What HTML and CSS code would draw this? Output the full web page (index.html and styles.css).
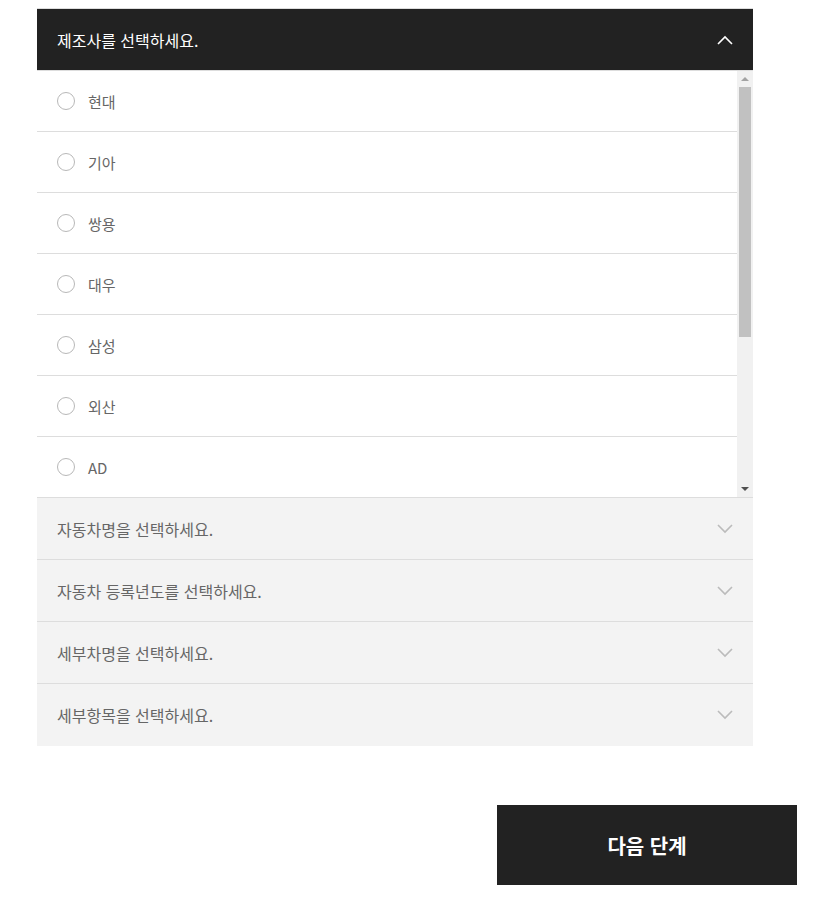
FILE: index.html
```html
<!DOCTYPE html>
<html lang="ko">
<head>
  <meta charset="UTF-8" />
  <meta name="viewport" content="width=device-width, initial-scale=1.0" />
  <title>차량 선택</title>
  <link rel="stylesheet" href="styles.css">
</head>
<body>
  <div class="wrap">
    <div class="panel">
      <div class="step open">
        <div class="step-head">
          <span class="step-title">제조사를 선택하세요.</span>
          <svg class="chev" width="16" height="10" viewBox="0 0 16 10"><polyline points="1,9 8,2 15,9" fill="none" stroke="currentColor" stroke-width="1.6"/></svg>
        </div>
        <div class="opt-box">
          <ul class="opt-list">
            <li><label><input type="radio" name="maker"><span class="dot"></span>현대</label></li>
            <li><label><input type="radio" name="maker"><span class="dot"></span>기아</label></li>
            <li><label><input type="radio" name="maker"><span class="dot"></span>쌍용</label></li>
            <li><label><input type="radio" name="maker"><span class="dot"></span>대우</label></li>
            <li><label><input type="radio" name="maker"><span class="dot"></span>삼성</label></li>
            <li><label><input type="radio" name="maker"><span class="dot"></span>외산</label></li>
            <li><label><input type="radio" name="maker"><span class="dot"></span>AD</label></li>
          </ul>
          <div class="sbar">
            <div class="sbar-btn"><span class="tri up"></span></div>
            <div class="sbar-track"><div class="sbar-thumb"></div></div>
            <div class="sbar-btn"><span class="tri down"></span></div>
          </div>
        </div>
      </div>

      <div class="step">
        <div class="step-head">
          <span class="step-title">자동차명을 선택하세요.</span>
          <svg class="chev" width="16" height="10" viewBox="0 0 16 10"><polyline points="1,1 8,8 15,1" fill="none" stroke="currentColor" stroke-width="1.6"/></svg>
        </div>
      </div>
      <div class="step">
        <div class="step-head">
          <span class="step-title">자동차 등록년도를 선택하세요.</span>
          <svg class="chev" width="16" height="10" viewBox="0 0 16 10"><polyline points="1,1 8,8 15,1" fill="none" stroke="currentColor" stroke-width="1.6"/></svg>
        </div>
      </div>
      <div class="step">
        <div class="step-head">
          <span class="step-title">세부차명을 선택하세요.</span>
          <svg class="chev" width="16" height="10" viewBox="0 0 16 10"><polyline points="1,1 8,8 15,1" fill="none" stroke="currentColor" stroke-width="1.6"/></svg>
        </div>
      </div>
      <div class="step">
        <div class="step-head">
          <span class="step-title">세부항목을 선택하세요.</span>
          <svg class="chev" width="16" height="10" viewBox="0 0 16 10"><polyline points="1,1 8,8 15,1" fill="none" stroke="currentColor" stroke-width="1.6"/></svg>
        </div>
      </div>
    </div>

    <div class="actions">
      <button class="next-btn">다음 단계</button>
    </div>
  </div>
</body>
</html>
```

FILE: styles.css
```css
body {
  margin: 8px;
  font-family: "Noto Sans CJK KR", "Noto Sans", sans-serif;
  background: #fff;
}
.wrap {
  width: 789px;
}
.panel {
  margin-left: 29px;
  width: 716px;
  border-top: 1px solid #ddd;
}
.step-head {
  display: flex;
  align-items: center;
  justify-content: space-between;
  height: 61px;
  padding: 0 20px;
  background: #f3f3f3;
  color: #666;
  font-size: 16px;
  border-bottom: 1px solid #ddd;
}
.step:last-child .step-head {
  height: 62px;
  border-bottom: none;
}
.step-title {
  line-height: 24px;
}
.step-head .chev {
  color: #bbb;
}
.open .step-head {
  background: #222;
  color: #fff;
}
.open .step-head .chev {
  color: #fff;
}

/* option list with scrollbar */
.opt-box {
  display: flex;
  height: 426px;
  border-bottom: 1px solid #ddd;
}
.opt-list {
  flex: 1;
  list-style: none;
  margin: 0;
  padding: 0;
  overflow: hidden;
}
.opt-list li {
  border-bottom: 1px solid #ddd;
}
.opt-list li:last-child {
  border-bottom: none;
}
.opt-list label {
  display: flex;
  align-items: center;
  height: 60px;
  padding: 0 20px;
  font-size: 15px;
  color: #666;
  cursor: pointer;
}
.opt-list input {
  display: none;
}
.dot {
  width: 16px;
  height: 16px;
  border: 1px solid #b8b8b8;
  border-radius: 50%;
  margin-right: 13px;
  box-sizing: content-box;
}
.sbar {
  width: 16px;
  display: flex;
  flex-direction: column;
  background: #f1f1f1;
}
.sbar-btn {
  height: 16px;
  display: flex;
  align-items: center;
  justify-content: center;
}
.tri {
  width: 0;
  height: 0;
  border-left: 4px solid transparent;
  border-right: 4px solid transparent;
}
.tri.up {
  border-bottom: 4px solid #a3a3a3;
}
.tri.down {
  border-top: 4px solid #505050;
}
.sbar-track {
  flex: 1;
  padding: 0 2px;
}
.sbar-thumb {
  height: 250px;
  background: #c1c1c1;
}

.actions {
  display: flex;
  justify-content: flex-end;
  margin-top: 59px;
}
.next-btn {
  width: 300px;
  height: 80px;
  border: none;
  background: #222;
  color: #fff;
  font-family: inherit;
  font-size: 20px;
  font-weight: bold;
  cursor: pointer;
}
```
